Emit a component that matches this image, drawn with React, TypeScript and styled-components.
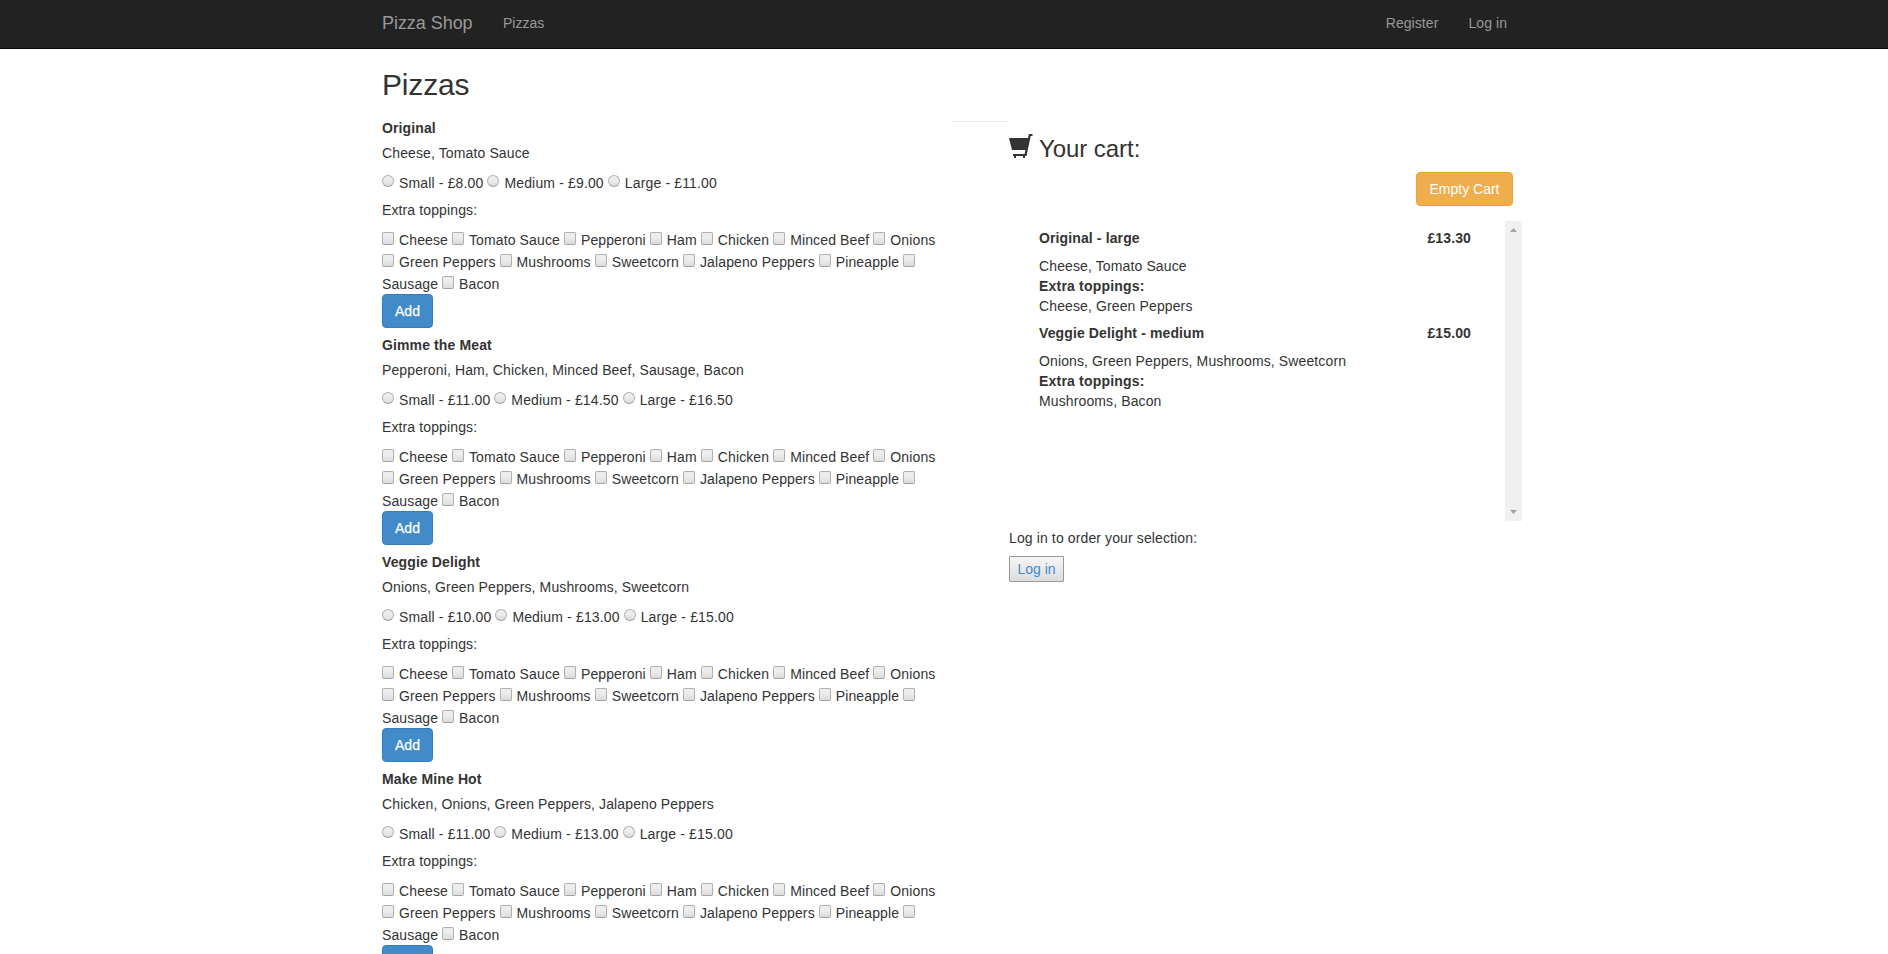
import React from "react";
import styled, { createGlobalStyle } from "styled-components";

const GlobalStyle = createGlobalStyle`
  * { box-sizing: border-box; }
  html, body { margin: 0; height: 954px; overflow: hidden; background: #fff; }
  body {
    font: 14px/20px "Liberation Sans", Arial, sans-serif;
    letter-spacing: 0.12px;
    color: #333;
  }
  h2, h3, h4, p { margin: 0; font-weight: normal; }
`;

const Page = styled.div`
  height: 954px;
  overflow: hidden;
`;

const NavBar = styled.nav`
  height: 49px;
  background: #222;
  border-bottom: 1px solid #080808;
`;

const NavInner = styled.div`
  width: 1125px;
  margin-left: 382px;
  display: flex;
  padding-top: 13px;
  color: #999;
  letter-spacing: 0;
`;

const Brand = styled.span`
  font-size: 18px;
  width: 121px;
  letter-spacing: -0.05px;
`;

const NavLinks = styled.div`
  display: flex;
  gap: 30px;
`;

const AccountLinks = styled(NavLinks)`
  margin-left: auto;
  letter-spacing: 0.07px;
`;

const Container = styled.main`
  width: 1140px;
  margin-left: 382px;
`;

const Heading = styled.h2`
  font-size: 30px;
  line-height: 33px;
  margin-top: 19px;
  letter-spacing: -0.15px;
`;

const Columns = styled.div`
  display: flex;
  align-items: flex-start;
  padding-top: 17px;
`;

const Menu = styled.section`
  width: 570px;
`;

const Pizza = styled.article`
  height: 217px;
`;

const PizzaName = styled.h4`
  font-size: 14px;
  font-weight: bold;
`;

const Ingredients = styled.p`
  margin-top: 5px;
`;

const Options = styled.div`
  display: flex;
  gap: 4px;
  margin-top: 10px;
  letter-spacing: 0.15px;
`;

const Label = styled.label`
  display: flex;
  gap: 5px;
  white-space: nowrap;
`;

const Control = styled.input`
  appearance: none;
  flex: none;
  width: 12px;
  height: ${(p) => (p.type === "radio" ? "12px" : "12.5px")};
  margin: 2px 0 0;
  border: 1px solid #b0b0b0;
  border-bottom-color: #a3a3a3;
  border-radius: ${(p) => (p.type === "radio" ? "50%" : "2px")};
  background: linear-gradient(#ededed 38%, #dcdcdc);
`;

const ExtraTitle = styled.p`
  margin-top: 7px;
`;

const Toppings = styled.div`
  margin: 10px 0 -2px;
`;

const ToppingRow = styled.div`
  display: flex;
  gap: 4px;
  height: 22px;
`;

const Button = styled.button<{ $tone: "primary" | "warning" }>`
  height: 34px;
  padding: 0 12px;
  font: inherit;
  color: #fff;
  border-radius: 4px;
  border: 1px solid ${(p) => (p.$tone === "primary" ? "#357ebd" : "#eea236")};
  background: ${(p) => (p.$tone === "primary" ? "#428bca" : "#f0ad4e")};
`;

const AddButton = styled(Button)`
  display: block;
  width: 51px;
  -webkit-text-stroke: 0.25px #fff;
`;

const Divider = styled.div`
  width: 57px;
  height: 1px;
  margin-top: 3px;
  background: #eee;
`;

const Cart = styled.aside`
  width: 513px;
  padding-top: 13px;
`;

const CartTitle = styled.h3`
  display: flex;
  gap: 6px;
  font-size: 24px;
  line-height: 26px;
  padding-top: 5px;
  letter-spacing: -0.06px;
`;

const CartIcon = styled.svg`
  flex: none;
  margin-top: -3px;
`;

const CartActions = styled.div`
  display: flex;
  justify-content: flex-end;
  padding: 10px 9px 0 0;
`;

const EmptyButton = styled(Button)`
  width: 97px;
  white-space: nowrap;
`;

const CartBox = styled.div`
  display: flex;
  height: 300px;
  margin-top: 15px;
`;

const CartItems = styled.div`
  flex: 1;
  padding: 7px 34px 0 30px;
`;

const CartItem = styled.div`
  height: 95px;
`;

const ItemHead = styled.div`
  display: flex;
  justify-content: space-between;
  font-weight: bold;
  margin-bottom: 8px;
`;

const Strong = styled.p`
  font-weight: bold;
  letter-spacing: 0.2px;
`;

const ScrollTrack = styled.div`
  width: 17px;
  background: #f0f0f0;
  display: flex;
  flex-direction: column;
  align-items: center;
  justify-content: space-between;
  padding: 7px 0;
`;

const LoginText = styled.p`
  margin-top: 7px;
`;

const LoginButton = styled.button`
  display: block;
  width: 55px;
  height: 26px;
  margin-top: 8px;
  padding: 0;
  font: inherit;
  color: #428bca;
  border: 1px solid #999;
  border-radius: 1px;
  background: linear-gradient(#f6f6f6, #dddddd);
`;

const pizzas = [
  { name: "Original", base: "Cheese, Tomato Sauce", prices: ["8.00", "9.00", "11.00"] },
  { name: "Gimme the Meat", base: "Pepperoni, Ham, Chicken, Minced Beef, Sausage, Bacon", prices: ["11.00", "14.50", "16.50"] },
  { name: "Veggie Delight", base: "Onions, Green Peppers, Mushrooms, Sweetcorn", prices: ["10.00", "13.00", "15.00"] },
  { name: "Make Mine Hot", base: "Chicken, Onions, Green Peppers, Jalapeno Peppers", prices: ["11.00", "13.00", "15.00"] },
];

const sizes = ["Small", "Medium", "Large"];

const cartItems = [
  { name: "Original - large", price: "£13.30", base: "Cheese, Tomato Sauce", extra: "Cheese, Green Peppers" },
  { name: "Veggie Delight - medium", price: "£15.00", base: "Onions, Green Peppers, Mushrooms, Sweetcorn", extra: "Mushrooms, Bacon" },
];

const Topping = ({ name }: { name: string }) => (
  <Label>
    <Control type="checkbox" />
    {name}
  </Label>
);

export default function App() {
  return (
    <Page>
      <GlobalStyle />
      <NavBar>
        <NavInner>
          <Brand>Pizza Shop</Brand>
          <NavLinks><span>Pizzas</span></NavLinks>
          <AccountLinks><span>Register</span><span>Log in</span></AccountLinks>
        </NavInner>
      </NavBar>
      <Container>
        <Heading>Pizzas</Heading>
        <Columns>
          <Menu>
            {pizzas.map((pizza) => (
              <Pizza key={pizza.name}>
                <PizzaName>{pizza.name}</PizzaName>
                <Ingredients>{pizza.base}</Ingredients>
                <Options>
                  {sizes.map((size, i) => (
                    <Label key={size}>
                      <Control type="radio" name={pizza.name} />
                      {`${size} - £${pizza.prices[i]}`}
                    </Label>
                  ))}
                </Options>
                <ExtraTitle>Extra toppings:</ExtraTitle>
                <Toppings>
                  <ToppingRow>
                    {["Cheese", "Tomato Sauce", "Pepperoni", "Ham", "Chicken", "Minced Beef", "Onions"].map((t) => <Topping key={t} name={t} />)}
                  </ToppingRow>
                  <ToppingRow>
                    {["Green Peppers", "Mushrooms", "Sweetcorn", "Jalapeno Peppers", "Pineapple", ""].map((t) => <Topping key={t} name={t} />)}
                  </ToppingRow>
                  <ToppingRow>
                    <span>Sausage</span>
                    <Topping name="Bacon" />
                  </ToppingRow>
                </Toppings>
                <AddButton $tone="primary">Add</AddButton>
              </Pizza>
            ))}
          </Menu>
          <Divider />
          <Cart>
            <CartTitle>
              <CartIcon width="24" height="26" viewBox="0 0 24 26" fill="#333">
                <path d="M0 5H19L20 1H23.5V3H21.7L17.5 23H4V21H15.6L16.4 17H3Z" />
                <path d="M5 23h2v2h-2zM14 23h2v2h-2z" />
              </CartIcon>
              Your cart:
            </CartTitle>
            <CartActions><EmptyButton $tone="warning">Empty Cart</EmptyButton></CartActions>
            <CartBox>
              <CartItems>
                {cartItems.map((item) => (
                  <CartItem key={item.name}>
                    <ItemHead><span>{item.name}</span><span>{item.price}</span></ItemHead>
                    <p>{item.base}</p>
                    <Strong>Extra toppings:</Strong>
                    <p>{item.extra}</p>
                  </CartItem>
                ))}
              </CartItems>
              <ScrollTrack>
                <svg width="7" height="4" viewBox="0 0 7 4" fill="#a3a3a3"><path d="M0 4L3.5 0L7 4Z" /></svg>
                <svg width="7" height="4" viewBox="0 0 7 4" fill="#a3a3a3"><path d="M0 0L3.5 4L7 0Z" /></svg>
              </ScrollTrack>
            </CartBox>
            <LoginText>Log in to order your selection:</LoginText>
            <LoginButton>Log in</LoginButton>
          </Cart>
        </Columns>
      </Container>
    </Page>
  );
}
